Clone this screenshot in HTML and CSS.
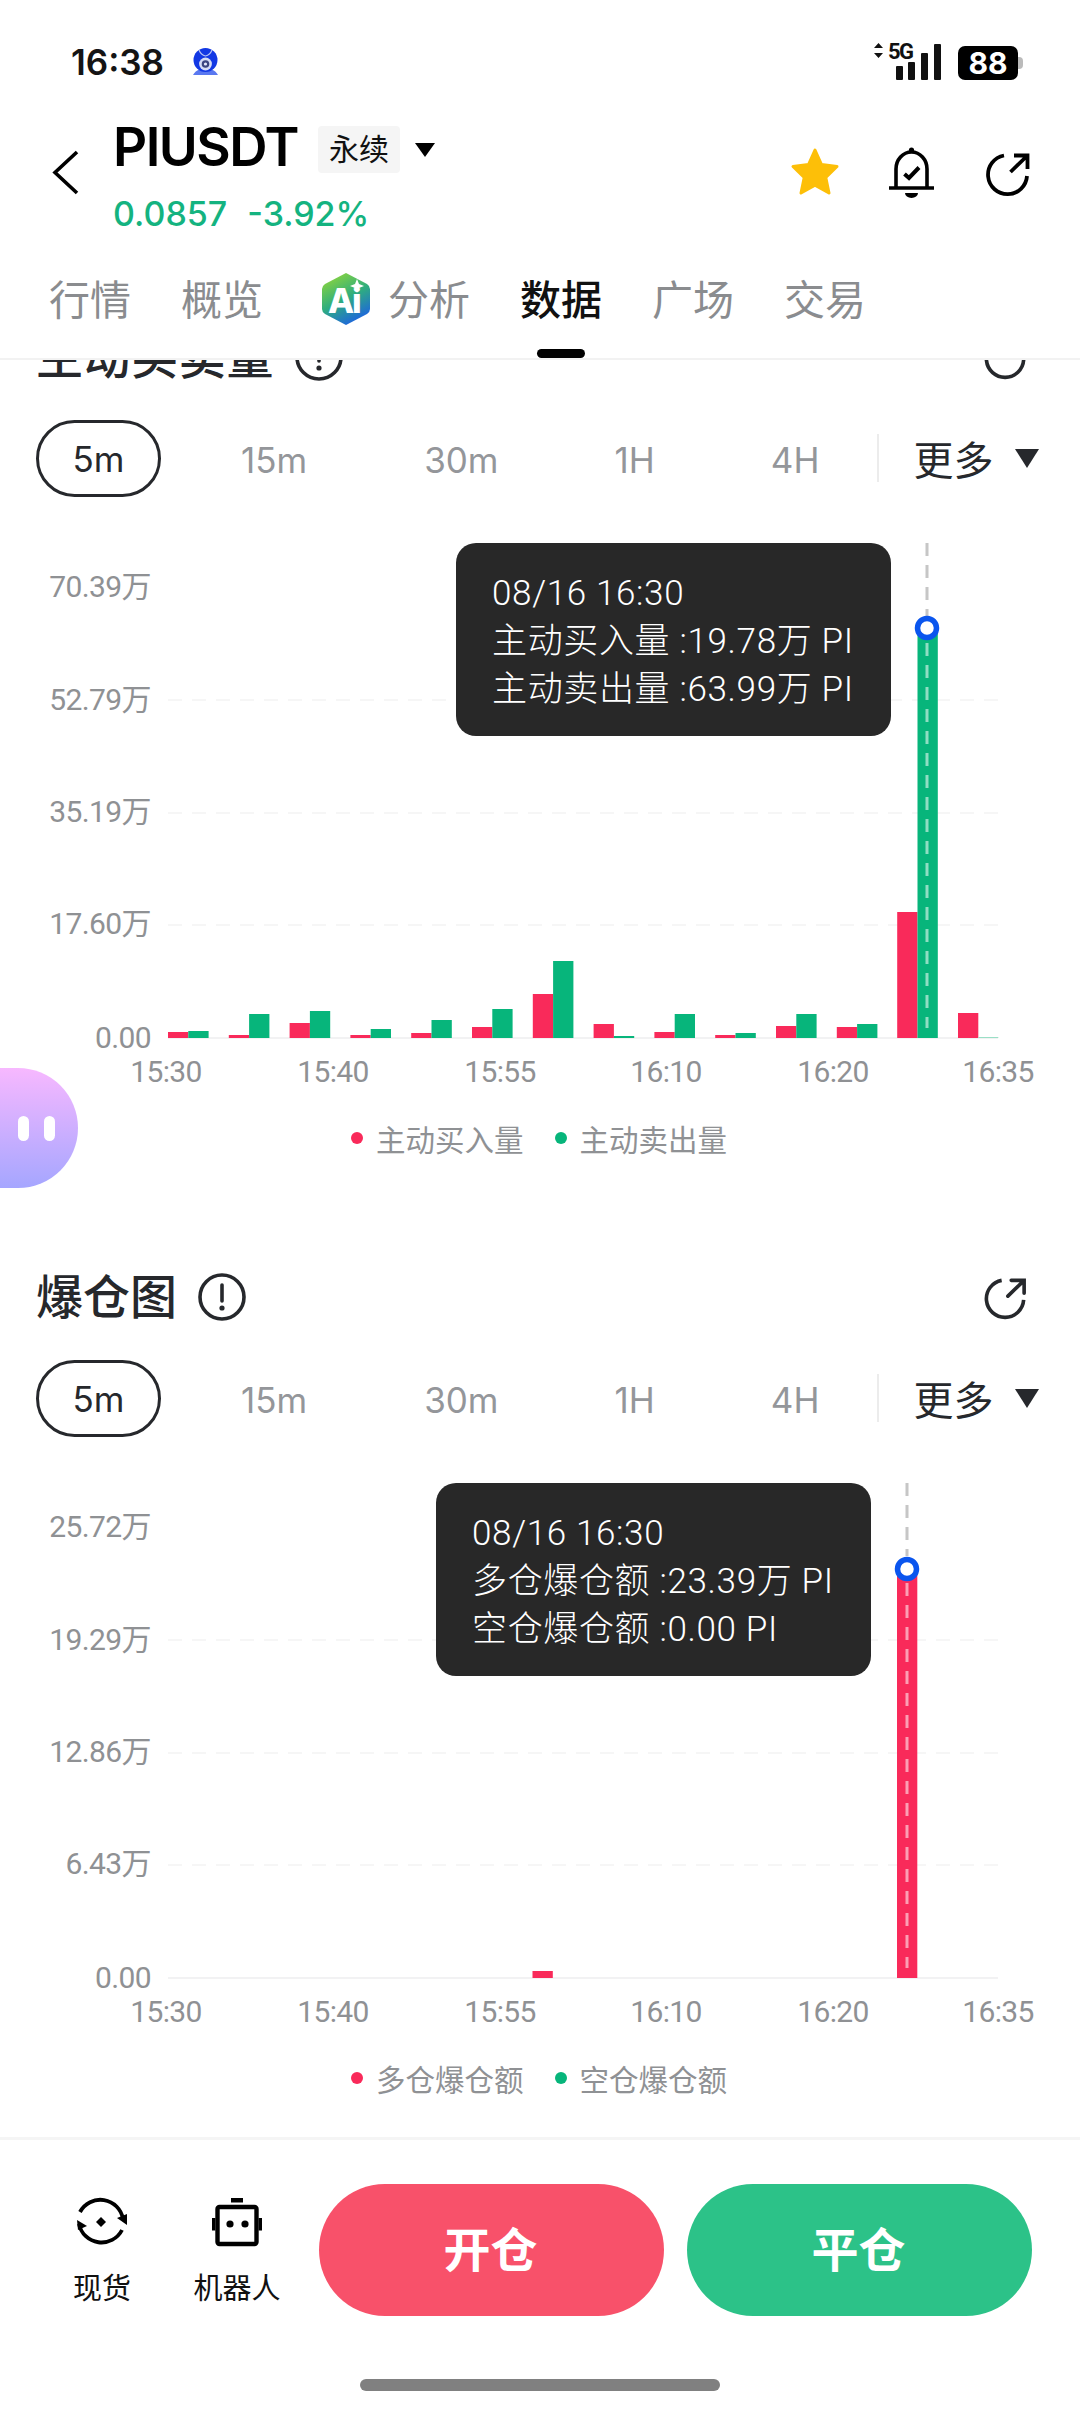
FILE: index.html
```html
<!DOCTYPE html>
<html lang="zh">
<head>
    <meta charset="UTF-8">
    <meta name="viewport" content="width=device-width, initial-scale=1.0">
    <title>PIUSDT</title>
    <link rel="stylesheet" href="styles.css">
</head>
<body>
    <div class="page">
        <div class="status-bar">
            <div class="status-left">
                <span class="status-time">16:38</span>
                <svg class="status-app" viewBox="0 0 30 30">
                    <path d="M2 28 Q4 24 9 22 H20 Q25 24 27 28 Z" fill="#5a78f0"/>
                    <circle cx="14.5" cy="13" r="12" fill="#1238e4"/>
                    <circle cx="14.5" cy="17" r="6.4" fill="#d5dcf5"/>
                    <circle cx="14.5" cy="17" r="3.8" fill="#3c4680"/>
                    <circle cx="14.5" cy="17" r="1.6" fill="#e4e8fb"/>
                    <path d="M8 3 Q10 8 14.5 9 Q19 8 21 3" fill="none" stroke="#b7c3f5" stroke-width="1.2"/>
                </svg>
            </div>
            <div class="status-right">
                <svg class="status-signal" viewBox="0 0 68 38">
                    <path d="M5.5 0 L10 5 H1 Z M5.5 15 L10 10 H1 Z" fill="#111"/>
                    <text class="signal-text" x="15" y="16">5G</text>
                    <rect x="23" y="23" width="7" height="14" rx="1" fill="#111"/>
                    <rect x="35" y="19" width="7" height="18" rx="1" fill="#111"/>
                    <rect x="48" y="10" width="7" height="27" rx="1" fill="#111"/>
                    <rect x="61" y="1" width="7" height="36" rx="1" fill="#111"/>
                </svg>
                <div class="battery">
                    <span class="battery-num">88</span>
                    <span class="battery-nub"></span>
                </div>
            </div>
        </div>

        <div class="header">
            <svg class="back-icon" viewBox="0 0 27 45">
                <path d="M25 2 L3 22.5 L25 43" fill="none" stroke="#000" stroke-width="3.6"/>
            </svg>
            <div class="header-info">
                <div class="symbol-row">
                    <span class="symbol">PIUSDT</span>
                    <span class="symbol-tag">永续</span>
                    <span class="symbol-arrow"></span>
                </div>
                <div class="price-row">
                    <span>0.0857</span>
                    <span>-3.92%</span>
                </div>
            </div>
            <div class="header-actions">
                <svg class="star-icon" viewBox="0 0 50 50">
                    <path d="M25 3 L31.5 17.5 L47 19.5 L35.8 30.5 L39 46 L25 38.2 L11 46 L14.2 30.5 L3 19.5 L18.5 17.5 Z" fill="#fdbf08" stroke="#fdbf08" stroke-width="3" stroke-linejoin="round"/>
                </svg>
                <svg class="bell-icon" viewBox="0 0 45 51">
                    <circle cx="22.5" cy="3" r="2.6" fill="#000"/>
                    <path d="M7 41 V22 A15.5 17 0 0 1 38 22 V41" fill="none" stroke="#000" stroke-width="3.6"/>
                    <path d="M0 41 H45" stroke="#000" stroke-width="3.6"/>
                    <path d="M15.5 27 L20 31 L30 20.5" fill="none" stroke="#000" stroke-width="4"/>
                    <path d="M16 46 H29 A6.5 5 0 0 1 16 46 Z" fill="#000"/>
                </svg>
                <svg class="share-icon" viewBox="0 0 45 46">
                    <path d="M19 3.5 A19.5 19.5 0 1 0 42 24" fill="none" stroke="#000" stroke-width="3.8"/>
                    <path d="M25.5 20 L42 4 M29 3.5 H42.5 V17" fill="none" stroke="#000" stroke-width="3.8"/>
                </svg>
            </div>
        </div>

        <div class="tabs">
            <span class="tab">行情</span>
            <span class="tab">概览</span>
            <span class="tab tab-ai">
                <svg class="ai-icon" viewBox="0 0 50 54">
                    <defs>
                        <linearGradient id="aiGrad" x1="0.2" y1="0" x2="0.7" y2="1">
                            <stop offset="0" stop-color="#8fd63a"/>
                            <stop offset="0.5" stop-color="#2fae7e"/>
                            <stop offset="1" stop-color="#1c5fe6"/>
                        </linearGradient>
                    </defs>
                    <path d="M25 1 L46 12 Q49 14 49 17 V37 Q49 40 46 42 L25 53 L4 42 Q1 40 1 37 V17 Q1 14 4 12 Z" fill="url(#aiGrad)"/>
                    <text class="ai-letter" x="7" y="41">A</text>
                    <text class="ai-letter" x="31" y="41">i</text>
                    <path d="M36 7 L38 12 L43 14 L38 16 L36 21 L34 16 L29 14 L34 12 Z" fill="#fff"/>
                </svg>
                分析
            </span>
            <span class="tab tab-active">数据</span>
            <span class="tab">广场</span>
            <span class="tab">交易</span>
        </div>

        <div class="content">
            <div class="scroll">
                <div class="section">
                    <div class="section-head">
                        <div class="section-title">
                            <span class="title-long">主动买卖量</span>
                            <svg class="info-icon" viewBox="0 0 48 48">
                                <circle cx="24" cy="24" r="22" fill="none" stroke="#26282c" stroke-width="3.6"/>
                                <path d="M24 12 V28" stroke="#26282c" stroke-width="3.6" stroke-linecap="round"/>
                                <circle cx="24" cy="35" r="2.6" fill="#26282c"/>
                            </svg>
                        </div>
                        <svg class="share-small" viewBox="0 0 45 46">
                            <path d="M19 3.5 A19.5 19.5 0 1 0 42 24" fill="none" stroke="#26282c" stroke-width="3.8"/>
                            <path d="M25.5 20 L42 4 M29 3.5 H42.5 V17" fill="none" stroke="#26282c" stroke-width="3.8" stroke-linecap="round"/>
                        </svg>
                    </div>
                    <div class="periods">
                        <span class="period period-active">5m</span>
                        <span class="period p15">15m</span>
                        <span class="period p30">30m</span>
                        <span class="period p1h">1H</span>
                        <span class="period p4h">4H</span>
                        <span class="period-line"></span>
                        <span class="period-more">更多<i class="more-arrow"></i></span>
                    </div>
                    <div class="chart">
                        <svg class="plot" viewBox="0 0 1080 622">
                            <path class="grid" d="M168 203 H998 M168 316 H998 M168 428 H998"/>
                            <path class="axis" d="M168 541 H998"/>
                            <text class="label end" x="151" y="100">70.39万</text>
                            <text class="label end" x="151" y="213">52.79万</text>
                            <text class="label end" x="151" y="325">35.19万</text>
                            <text class="label end" x="151" y="437">17.60万</text>
                            <text class="label end" x="151" y="551">0.00</text>
                            <text class="label mid" x="166" y="585">15:30</text>
                            <text class="label mid" x="333" y="585">15:40</text>
                            <text class="label mid" x="500" y="585">15:55</text>
                            <text class="label mid" x="666" y="585">16:10</text>
                            <text class="label mid" x="833" y="585">16:20</text>
                            <text class="label mid" x="998" y="585">16:35</text>
                            <g class="up">
                                <rect x="168" y="535" width="20.3" height="6"/>
                                <rect x="228.8" y="538" width="20.3" height="3"/>
                                <rect x="289.6" y="526" width="20.3" height="15"/>
                                <rect x="350.4" y="538" width="20.3" height="3"/>
                                <rect x="411.2" y="536" width="20.3" height="5"/>
                                <rect x="472" y="530" width="20.3" height="11"/>
                                <rect x="532.8" y="497" width="20.3" height="44"/>
                                <rect x="593.6" y="527" width="20.3" height="14"/>
                                <rect x="654.4" y="535" width="20.3" height="6"/>
                                <rect x="715.2" y="538" width="20.3" height="3"/>
                                <rect x="776" y="529" width="20.3" height="12"/>
                                <rect x="836.8" y="530" width="20.3" height="11"/>
                                <rect x="897.2" y="415" width="20.3" height="126"/>
                                <rect x="958" y="516" width="20.3" height="25"/>
                            </g>
                            <g class="down">
                                <rect x="188.3" y="534" width="20.3" height="7"/>
                                <rect x="249.1" y="517" width="20.3" height="24"/>
                                <rect x="309.9" y="514" width="20.3" height="27"/>
                                <rect x="370.7" y="532" width="20.3" height="9"/>
                                <rect x="431.5" y="523" width="20.3" height="18"/>
                                <rect x="492.3" y="512" width="20.3" height="29"/>
                                <rect x="553.1" y="464" width="20.3" height="77"/>
                                <rect x="613.9" y="539" width="20.3" height="2"/>
                                <rect x="674.7" y="517" width="20.3" height="24"/>
                                <rect x="735.5" y="536" width="20.3" height="5"/>
                                <rect x="796.3" y="517" width="20.3" height="24"/>
                                <rect x="857.1" y="527" width="20.3" height="14"/>
                                <rect x="917.5" y="131" width="20.3" height="410"/>
                            </g>
                            <rect class="thin" x="978.3" y="540" width="20" height="1"/>
                            <path class="cursor" d="M927 46 V119"/>
                            <path class="cursor-on" d="M927 146 V531"/>
                            <circle class="node" cx="927" cy="131" r="9.5"/>
                        </svg>
                        <div class="tip tip-one">
                            <div>08/16 16:30</div>
                            <div>主动买入量 :19.78万 PI</div>
                            <div>主动卖出量 :63.99万 PI</div>
                        </div>
                    </div>
                    <div class="legend">
                        <i class="dot dot-up"></i><span class="legend-text">主动买入量</span>
                        <i class="dot dot-down"></i><span class="legend-text">主动卖出量</span>
                    </div>
                </div>

                <div class="section">
                    <div class="section-head">
                        <div class="section-title">
                            <span>爆仓图</span>
                            <svg class="info-icon" viewBox="0 0 48 48">
                                <circle cx="24" cy="24" r="22" fill="none" stroke="#26282c" stroke-width="3.6"/>
                                <path d="M24 12 V28" stroke="#26282c" stroke-width="3.6" stroke-linecap="round"/>
                                <circle cx="24" cy="35" r="2.6" fill="#26282c"/>
                            </svg>
                        </div>
                        <svg class="share-small" viewBox="0 0 45 46">
                            <path d="M19 3.5 A19.5 19.5 0 1 0 42 24" fill="none" stroke="#26282c" stroke-width="3.8"/>
                            <path d="M25.5 20 L42 4 M29 3.5 H42.5 V17" fill="none" stroke="#26282c" stroke-width="3.8" stroke-linecap="round"/>
                        </svg>
                    </div>
                    <div class="periods">
                        <span class="period period-active">5m</span>
                        <span class="period p15">15m</span>
                        <span class="period p30">30m</span>
                        <span class="period p1h">1H</span>
                        <span class="period p4h">4H</span>
                        <span class="period-line"></span>
                        <span class="period-more">更多<i class="more-arrow"></i></span>
                    </div>
                    <div class="chart">
                        <svg class="plot" viewBox="0 0 1080 622">
                            <path class="grid" d="M168 203 H998 M168 316 H998 M168 428 H998"/>
                            <path class="axis" d="M168 541 H998"/>
                            <text class="label end" x="151" y="100">25.72万</text>
                            <text class="label end" x="151" y="213">19.29万</text>
                            <text class="label end" x="151" y="325">12.86万</text>
                            <text class="label end" x="151" y="437">6.43万</text>
                            <text class="label end" x="151" y="551">0.00</text>
                            <text class="label mid" x="166" y="585">15:30</text>
                            <text class="label mid" x="333" y="585">15:40</text>
                            <text class="label mid" x="500" y="585">15:55</text>
                            <text class="label mid" x="666" y="585">16:10</text>
                            <text class="label mid" x="833" y="585">16:20</text>
                            <text class="label mid" x="998" y="585">16:35</text>
                            <g class="up">
                                <rect x="532.5" y="534" width="20.3" height="7"/>
                                <rect x="897" y="132" width="20.3" height="409"/>
                            </g>
                            <path class="cursor" d="M907 46 V119"/>
                            <path class="cursor-on" d="M907 146 V531"/>
                            <circle class="node" cx="907" cy="132" r="9.5"/>
                        </svg>
                        <div class="tip tip-two">
                            <div>08/16 16:30</div>
                            <div>多仓爆仓额 :23.39万 PI</div>
                            <div>空仓爆仓额 :0.00 PI</div>
                        </div>
                    </div>
                    <div class="legend">
                        <i class="dot dot-up"></i><span class="legend-text">多仓爆仓额</span>
                        <i class="dot dot-down"></i><span class="legend-text">空仓爆仓额</span>
                    </div>
                </div>
            </div>

            <div class="float-bot">
                <i class="bot-eye"></i>
                <i class="bot-eye"></i>
            </div>
        </div>

        <div class="bottom-bar">
            <div class="bottom-tools">
                <div class="tool tool-spot">
                    <svg class="tool-icon" viewBox="0 0 50 50">
                        <path d="M3 15 A23 23 0 0 1 46 22" fill="none" stroke="#000" stroke-width="3.8"/>
                        <path d="M45 33 A23 23 0 0 1 2 27" fill="none" stroke="#000" stroke-width="3.8"/>
                        <path d="M40 21 L50 17 L50 28 Z" fill="#000"/>
                        <path d="M0 23 L10 29 L1 33 Z" fill="#000"/>
                        <path d="M24 20 L29 25 L24 30 L19 25 Z" fill="#000"/>
                    </svg>
                    <span class="tool-text">现货</span>
                </div>
                <div class="tool tool-robot">
                    <svg class="tool-icon" viewBox="0 0 50 50">
                        <rect x="19" y="1" width="12" height="4.5" fill="#000"/>
                        <rect x="5.5" y="10" width="39" height="37" rx="2" fill="none" stroke="#000" stroke-width="4.4"/>
                        <rect x="0" y="21" width="3.4" height="12.5" fill="#000"/>
                        <rect x="46.6" y="21" width="3.4" height="12.5" fill="#000"/>
                        <circle cx="18" cy="27" r="3.6" fill="#000"/>
                        <circle cx="33" cy="27" r="3.6" fill="#000"/>
                    </svg>
                    <span class="tool-text">机器人</span>
                </div>
            </div>
            <span class="trade-btn btn-open">开仓</span>
            <span class="trade-btn btn-close">平仓</span>
        </div>
        <div class="home-bar"><span class="home-pill"></span></div>
    </div>
</body>
</html>
```

FILE: styles.css
```css
*{
    margin: 0;
    padding: 0;
    box-sizing: border-box;
}
body{
    width: 1080px;
    height: 2412px;
    overflow: hidden;
    background: #fff;
    font-family: Inter, "Noto Sans CJK SC", sans-serif;
    color: #26282c;
}
.page{
    width: 1080px;
    height: 2412px;
    display: flex;
    flex-direction: column;
}

/* status bar */
.status-bar{
    height: 100px;
    padding: 43px 62px 0 71px;
    display: flex;
    justify-content: space-between;
    align-items: flex-start;
}
.status-left{
    display: flex;
    align-items: center;
    gap: 27px;
    height: 38px;
}
.status-time{
    font-size: 35px;
    font-weight: 600;
    color: #141414;
}
.status-app{
    width: 30px;
    height: 30px;
}
.status-right{
    display: flex;
    gap: 17px;
}
.status-signal{
    width: 68px;
    height: 38px;
    overflow: visible;
}
.signal-text{
    font-family: Roboto, sans-serif;
    font-size: 22px;
    font-weight: 700;
    letter-spacing: -1.5px;
    fill: #111;
}
.battery{
    width: 60px;
    height: 34px;
    margin-top: 3px;
    background: #000;
    border-radius: 7px;
    position: relative;
    display: flex;
    align-items: center;
    justify-content: center;
}
.battery-num{
    font-size: 30px;
    font-weight: 700;
    color: #fff;
}
.battery-nub{
    position: absolute;
    right: -5px;
    top: 11px;
    width: 5px;
    height: 12px;
    background: #bbb;
    border-radius: 0 4px 4px 0;
}

/* header */
.header{
    height: 172px;
    padding: 0 50px 0 52px;
    display: flex;
    align-items: flex-start;
}
.back-icon{
    width: 27px;
    height: 45px;
    margin-top: 50px;
}
.header-info{
    margin-left: 34px;
    flex: 1;
}
.symbol-row{
    display: flex;
    align-items: center;
    height: 47px;
    margin-top: 23px;
}
.symbol{
    font-size: 53px;
    font-weight: 600;
    color: #000;
    letter-spacing: -1.5px;
}
.symbol-tag{
    width: 82px;
    height: 47px;
    margin-left: 20px;
    margin-top: 6px;
    background: #f5f5f5;
    border-radius: 4px;
    font-size: 30px;
    line-height: 47px;
    text-align: center;
    color: #111;
}
.symbol-arrow{
    width: 0;
    height: 0;
    margin-left: 15px;
    margin-top: 7px;
    border-left: 10px solid transparent;
    border-right: 10px solid transparent;
    border-top: 14px solid #000;
}
.price-row{
    display: flex;
    gap: 20px;
    margin-top: 27px;
    font-size: 34px;
    font-weight: 500;
    line-height: 34px;
    color: #14b380;
}
.header-actions{
    display: flex;
    align-items: flex-start;
    margin-top: 47px;
}
.star-icon{
    width: 50px;
    height: 50px;
}
.bell-icon{
    width: 45px;
    height: 51px;
    margin-left: 49px;
}
.share-icon{
    width: 45px;
    height: 46px;
    margin-left: 51px;
    margin-top: 5px;
}

/* tabs */
.tabs{
    height: 88px;
    padding-left: 49px;
    display: flex;
    gap: 50px;
    border-bottom: 2px solid #f2f2f2;
    position: relative;
    z-index: 2;
    background: #fff;
}
.tab{
    font-size: 41px;
    line-height: 46px;
    margin-top: 5px;
    color: #8a8c8f;
    position: relative;
    display: flex;
    align-items: flex-start;
}
.tab-ai{
    margin-left: 8px;
}
.ai-icon{
    width: 50px;
    height: 54px;
    margin-top: -5px;
    margin-right: 17px;
}
.ai-letter{
    font-size: 34px;
    font-weight: 800;
    fill: #fff;
}
.tab-active{
    color: #111;
    font-weight: 500;
}
.tab-active::after{
    content: "";
    position: absolute;
    left: 17px;
    right: 17px;
    bottom: 0;
    height: 9px;
    background: #000;
    border-radius: 5px;
}

/* scrolling part */
.content{
    flex: 1;
    overflow: hidden;
    position: relative;
}
.scroll{
    margin-top: -28px;
}
.section{
    padding-bottom: 115px;
}
.section-head{
    height: 50px;
    padding: 0 53px 0 36px;
    display: flex;
    justify-content: space-between;
    align-items: center;
}
.section-title{
    display: flex;
    align-items: center;
    gap: 21px;
    font-size: 47px;
    font-weight: 500;
    line-height: 50px;
}
.title-long{
    letter-spacing: .6px;
}
.info-icon{
    width: 48px;
    height: 48px;
}
.share-small{
    width: 44px;
    height: 44px;
    margin-top: 4px;
}
.periods{
    height: 78px;
    margin-top: 37px;
    padding-left: 36px;
    display: flex;
    align-items: center;
    position: relative;
}
.period{
    font-size: 35px;
    color: #94969a;
    margin-top: 3px;
}
.period-active{
    width: 125px;
    height: 77px;
    margin-top: 0;
    border: 3px solid #26282c;
    border-radius: 39px;
    line-height: 73px;
    text-align: center;
    color: #26282c;
}
.p15{
    margin-left: 80px;
}
.p30{
    margin-left: 117px;
}
.p1h{
    margin-left: 116px;
}
.p4h{
    margin-left: 116px;
}
.period-line{
    width: 2px;
    height: 48px;
    margin-left: 58px;
    background: #ececec;
}
.period-more{
    margin-left: 34px;
    font-size: 40px;
    color: #26282c;
    display: flex;
    align-items: center;
}
.more-arrow{
    width: 0;
    height: 0;
    margin-left: 22px;
    border-left: 12px solid transparent;
    border-right: 12px solid transparent;
    border-top: 19px solid #26282c;
}

/* chart */
.chart{
    height: 622px;
    position: relative;
}
.plot{
    display: block;
    width: 1080px;
    height: 622px;
}
.grid{
    fill: none;
    stroke: #f6f6f6;
    stroke-width: 2;
    stroke-dasharray: 14 10;
}
.axis{
    fill: none;
    stroke: #f2f2f3;
    stroke-width: 2;
}
.label{
    font-family: Roboto, "Noto Sans CJK SC", sans-serif;
    font-size: 30px;
    letter-spacing: -.6px;
    fill: #8f9194;
}
.end{
    text-anchor: end;
}
.mid{
    text-anchor: middle;
}
.up rect{
    fill: #f92a5a;
}
.down rect{
    fill: #07b57b;
}
.thin{
    fill: #9adfc6;
}
.cursor{
    fill: none;
    stroke: #c6c6c6;
    stroke-width: 3;
    stroke-dasharray: 13 9;
}
.cursor-on{
    fill: none;
    stroke: #fff;
    stroke-opacity: .55;
    stroke-width: 3;
    stroke-dasharray: 13 9;
}
.node{
    fill: #fff;
    stroke: #0a55ee;
    stroke-width: 5.5;
}
.tip{
    position: absolute;
    top: 46px;
    width: 435px;
    height: 193px;
    padding: 27px 0 0 36px;
    background: #282828;
    border-radius: 20px;
    font-family: Roboto, "Noto Sans CJK SC", sans-serif;
    font-size: 35px;
    font-weight: 300;
    letter-spacing: .65px;
    line-height: 48px;
    color: #fff;
    white-space: nowrap;
}
.tip-one{
    left: 456px;
}
.tip-two{
    left: 436px;
}
.legend{
    height: 38px;
    padding-left: 351px;
    display: flex;
    align-items: center;
}
.dot{
    width: 12px;
    height: 12px;
    border-radius: 50%;
}
.dot-up{
    background: #f92a5a;
}
.dot-down{
    background: #07b57b;
    margin-left: 31px;
}
.legend-text{
    margin-left: 13px;
    font-family: "Noto Sans CJK SC", sans-serif;
    font-size: 29.5px;
    color: #8f9194;
}

/* floating bot */
.float-bot{
    position: absolute;
    left: 0;
    top: 708px;
    width: 78px;
    height: 120px;
    border-radius: 0 60px 60px 0;
    background: linear-gradient(#f7b8ff, #a5a6ff);
    padding-left: 18px;
    display: flex;
    align-items: center;
    gap: 15px;
}
.bot-eye{
    width: 11px;
    height: 25px;
    background: #fff;
    border-radius: 6px;
}

/* bottom */
.bottom-bar{
    height: 232px;
    padding: 44px 48px 0 0;
    border-top: 3px solid #f5f5f5;
    display: flex;
    align-items: flex-start;
}
.bottom-tools{
    width: 319px;
    display: flex;
}
.tool{
    display: flex;
    flex-direction: column;
    align-items: center;
}
.tool-spot{
    width: 58px;
    margin-left: 73px;
}
.tool-robot{
    width: 90px;
    margin-left: 61px;
}
.tool-icon{
    width: 50px;
    height: 50px;
    margin-top: 13px;
}
.tool-text{
    margin-top: 24px;
    font-family: "Noto Sans CJK SC", sans-serif;
    font-size: 29px;
    line-height: 30px;
    color: #111;
    white-space: nowrap;
}
.trade-btn{
    width: 345px;
    height: 132px;
    border-radius: 66px;
    font-size: 47px;
    font-weight: 700;
    line-height: 132px;
    text-align: center;
    color: #fff;
    padding-right: 2px;
}
.btn-open{
    background: #f8516a;
}
.btn-close{
    margin-left: 23px;
    background: #2cc288;
}
.home-bar{
    height: 43px;
    padding-top: 10px;
    display: flex;
    justify-content: center;
    align-items: flex-start;
}
.home-pill{
    width: 360px;
    height: 12px;
    background: #808080;
    border-radius: 6px;
}
```
